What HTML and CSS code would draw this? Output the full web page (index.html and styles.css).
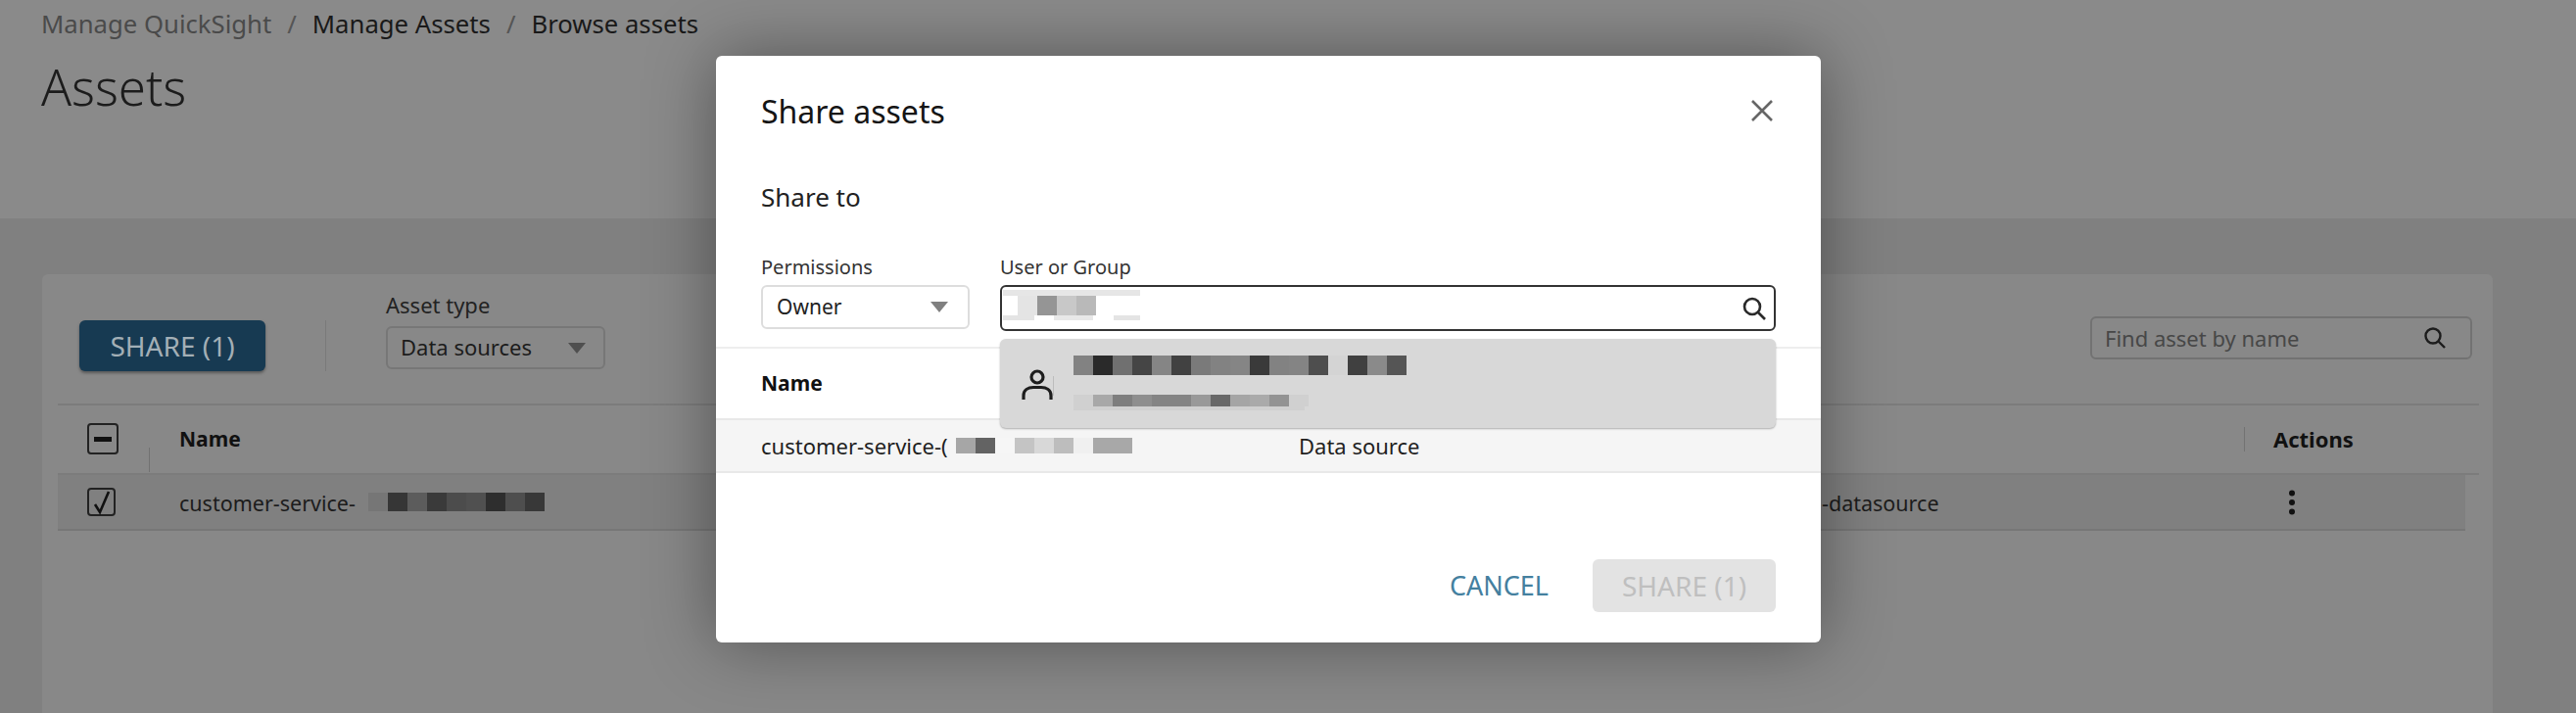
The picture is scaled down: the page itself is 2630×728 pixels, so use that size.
FILE: index.html
```html
<!DOCTYPE html>
<html lang="en">
<head>
  <meta charset="UTF-8" />
  <title>Assets</title>
  <link rel="stylesheet" href="styles.css">
</head>
<body>

  <header class="page-head">
    <nav class="crumbs">
      <span class="crumb-first">Manage QuickSight</span>
      <span class="crumb-sep">/</span>
      <span>Manage Assets</span>
      <span class="crumb-sep">/</span>
      <span>Browse assets</span>
    </nav>
    <h1>Assets</h1>
  </header>

  <main class="content">
    <section class="card">
      <div class="toolbar">
        <button class="btn-share">SHARE (1)</button>
        <div class="tool-sep"></div>
        <div class="asset-type">
          <label>Asset type</label>
          <div class="select select-type">
            <span>Data sources</span>
            <svg class="caret" width="18" height="11" viewBox="0 0 18 11"><polygon points="0,0 18,0 9,11" fill="#4f4f4f"/></svg>
          </div>
        </div>
        <div class="find">
          <span>Find asset by name</span>
          <svg width="24" height="24" viewBox="0 0 24 24" fill="none" stroke="#1c1c1c" stroke-width="2.4"><circle cx="10" cy="10" r="7.5"/><path d="M15.5 15.5 L22 22"/></svg>
        </div>
      </div>

      <div class="table">
        <div class="table-head">
          <div class="col-check">
            <span class="box box-minus"><i></i></span>
          </div>
          <div class="col-sep"></div>
          <div class="col-name">Name</div>
          <div class="col-sep col-sep-actions"></div>
          <div class="col-actions">Actions</div>
        </div>
        <div class="table-row">
          <div class="col-check">
            <span class="box box-checked">
              <svg width="22" height="26" viewBox="0 0 22 26" fill="none" stroke="#111" stroke-width="2.6"><path d="M4 15 L9 23 L18 2"/></svg>
            </span>
          </div>
          <div class="col-name col-name-row">
            <span class="row-text">customer-service-</span>
            <svg class="mosaic" width="180" height="19" shape-rendering="crispEdges">
              <rect x="0" width="20" height="19" fill="#767676"/>
              <rect x="20" width="20" height="19" fill="#363636"/>
              <rect x="40" width="20" height="19" fill="#5c5c5c"/>
              <rect x="60" width="20" height="19" fill="#3a3a3a"/>
              <rect x="80" width="20" height="19" fill="#4c4c4c"/>
              <rect x="100" width="20" height="19" fill="#505050"/>
              <rect x="120" width="20" height="19" fill="#2e2e2e"/>
              <rect x="140" width="20" height="19" fill="#4e4e4e"/>
              <rect x="160" width="20" height="19" fill="#383838"/>
            </svg>
          </div>
          <div class="col-owner">-datasource</div>
          <div class="col-kebab">
            <svg width="8" height="26" viewBox="0 0 8 26" fill="#111"><circle cx="4" cy="3.5" r="3"/><circle cx="4" cy="13" r="3"/><circle cx="4" cy="22.5" r="3"/></svg>
          </div>
        </div>
      </div>
    </section>
  </main>

  <div class="modal">
    <div class="modal-head">
      <h2>Share assets</h2>
      <svg class="modal-close" width="22" height="22" viewBox="0 0 22 22" stroke="#666" stroke-width="2.6"><path d="M1 1 L21 21 M21 1 L1 21"/></svg>
    </div>
    <h3>Share to</h3>

    <div class="fields">
      <div class="field-perm">
        <label>Permissions</label>
        <div class="select select-perm">
          <span>Owner</span>
          <svg class="caret" width="18" height="11" viewBox="0 0 18 11"><polygon points="0,0 18,0 9,11" fill="#808080"/></svg>
        </div>
      </div>
      <div class="field-user">
        <label>User or Group</label>
        <div class="user-input">
          <svg class="mosaic" width="140" height="31" shape-rendering="crispEdges">
            <rect x="0" y="0" width="140" height="6" fill="#e6e6e6"/>
            <rect x="15" y="6" width="20" height="20" fill="#e4e4e4"/>
            <rect x="35" y="6" width="20" height="20" fill="#959595"/>
            <rect x="55" y="6" width="20" height="20" fill="#c8c8c8"/>
            <rect x="75" y="6" width="20" height="20" fill="#b9b9b9"/>
            <rect x="0" y="26" width="32" height="5" fill="#e4e4e4"/>
            <rect x="52" y="26" width="40" height="5" fill="#e8e8e8"/>
            <rect x="113" y="26" width="27" height="5" fill="#e4e4e4"/>
          </svg>
          <svg class="user-search" width="24" height="24" viewBox="0 0 24 24" fill="none" stroke="#2a2a2a" stroke-width="2.6"><circle cx="10" cy="10" r="8"/><path d="M15.5 15.5 L23 23"/></svg>
        </div>

        <div class="suggest">
          <svg class="suggest-icon" width="32" height="32" viewBox="0 0 32 32" fill="none" stroke="#1e1e1e" stroke-width="3.2"><circle cx="16" cy="8" r="6"/><path d="M2 31 V27 C2 21 7 18.5 12 18.5 H20 C25 18.5 30 21 30 27 V31"/></svg>
          <div class="suggest-sep"></div>
          <div class="suggest-text">
            <svg class="mosaic" width="340" height="20" shape-rendering="crispEdges">
              <rect x="0" width="20" height="20" fill="#828282"/>
              <rect x="20" width="20" height="20" fill="#2a2a2a"/>
              <rect x="40" width="20" height="20" fill="#707070"/>
              <rect x="60" width="20" height="20" fill="#454545"/>
              <rect x="80" width="20" height="20" fill="#858585"/>
              <rect x="100" width="20" height="20" fill="#414141"/>
              <rect x="120" width="20" height="20" fill="#7a7a7a"/>
              <rect x="140" width="20" height="20" fill="#828282"/>
              <rect x="160" width="20" height="20" fill="#858585"/>
              <rect x="180" width="20" height="20" fill="#3a3a3a"/>
              <rect x="200" width="20" height="20" fill="#828282"/>
              <rect x="220" width="20" height="20" fill="#848484"/>
              <rect x="240" width="20" height="20" fill="#4e4e4e"/>
              <rect x="260" width="20" height="20" fill="#d4d4d4"/>
              <rect x="280" width="20" height="20" fill="#404040"/>
              <rect x="300" width="20" height="20" fill="#8a8a8a"/>
              <rect x="320" width="20" height="20" fill="#555555"/>
            </svg>
            <svg class="mosaic mosaic-mail" width="248" height="17" shape-rendering="crispEdges">
              <rect x="0" width="20" height="12" fill="#d0d0d0"/>
              <rect x="20" width="20" height="12" fill="#a8a8a8"/>
              <rect x="40" width="20" height="12" fill="#7e7e7e"/>
              <rect x="60" width="20" height="12" fill="#8e8e8e"/>
              <rect x="80" width="20" height="12" fill="#848484"/>
              <rect x="100" width="20" height="12" fill="#848484"/>
              <rect x="120" width="20" height="12" fill="#999999"/>
              <rect x="140" width="20" height="12" fill="#686868"/>
              <rect x="160" width="20" height="12" fill="#a5a5a5"/>
              <rect x="180" width="20" height="12" fill="#aaaaaa"/>
              <rect x="200" width="20" height="12" fill="#939393"/>
              <rect x="220" width="20" height="12" fill="#d0d0d0"/>
              <rect x="0" y="12" width="236" height="4" fill="#d0d0d0"/>
            </svg>
          </div>
        </div>
      </div>
    </div>

    <div class="share-table">
      <div class="share-head">Name</div>
      <div class="share-row">
        <div class="share-name">
          <span class="share-text">customer-service-(</span>
          <svg class="mosaic" width="180" height="16" shape-rendering="crispEdges">
            <rect x="0" width="20" height="16" fill="#a6a6a6"/>
            <rect x="20" width="20" height="16" fill="#636363"/>
            <rect x="40" width="20" height="16" fill="#f6f6f6"/>
            <rect x="60" width="20" height="16" fill="#c4c4c4"/>
            <rect x="80" width="20" height="16" fill="#d8d8d8"/>
            <rect x="100" width="20" height="16" fill="#bdbdbd"/>
            <rect x="120" width="20" height="16" fill="#f0f0f0"/>
            <rect x="140" width="40" height="16" fill="#a8a8a8"/>
          </svg>
        </div>
        <div class="share-type">Data source</div>
      </div>
    </div>

    <div class="modal-foot">
      <button class="btn-cancel">CANCEL</button>
      <button class="btn-disabled" disabled>SHARE (1)</button>
    </div>
  </div>

</body>
</html>
```

FILE: styles.css
```css
html, body {
  margin: 0;
  height: 728px;
  overflow: hidden;
}
body {
  position: relative;
  font-family: "Noto Sans", Arial, sans-serif;
  color: #1a1a1a;
  background: #808080;
  font-size: 22px;
}
h1, h2, h3 {
  margin: 0;
  font-weight: 400;
}
label {
  display: block;
}
button {
  font-family: inherit;
  border: none;
}
.mosaic {
  display: block;
}

/* page behind the dialog */
.page-head {
  height: 223px;
  box-sizing: border-box;
  padding: 8px 42px 0;
  background: #8a8a8a;
}
.crumbs {
  display: flex;
  gap: 16px;
  font-size: 25.7px;
  line-height: 34px;
  color: #191919;
}
.crumb-first {
  color: #4a4a4a;
}
.crumb-sep {
  color: #555;
}
.page-head h1 {
  margin-top: 17px;
  font-size: 51px;
  font-weight: 300;
  line-height: 58px;
  color: #1c1c1c;
}
.content {
  height: 505px;
  box-sizing: border-box;
  padding: 57px 85px 0 43px;
}
.card {
  height: 100%;
  background: #888;
  border-radius: 6px 6px 0 0;
  padding: 0 14px 0 16px;
}
.toolbar {
  height: 132px;
  box-sizing: border-box;
  display: flex;
  align-items: flex-end;
  padding: 0 7px 33px 22px;
}
.btn-share {
  width: 190px;
  height: 52px;
  border-radius: 6px;
  background: #173a52;
  color: #a3afb6;
  font-size: 28px;
  box-shadow: 0 2px 3px rgba(0, 0, 0, .35);
}
.tool-sep {
  width: 1px;
  height: 52px;
  margin-left: 61px;
  background: #7a7a7a;
}
.asset-type {
  margin: 0 0 2px 61px;
}
.asset-type label {
  line-height: 28px;
  margin-bottom: 8px;
  color: #222;
}
.select {
  display: flex;
  align-items: center;
  justify-content: space-between;
  box-sizing: border-box;
  height: 44px;
  border: 2px solid #777;
  border-radius: 6px;
}
.select span {
  padding-bottom: 2px;
}
.select-type {
  width: 224px;
  padding: 0 18px 0 13px;
  color: #1c1c1c;
}
.caret {
  display: block;
}
.find {
  margin: 0 0 12px auto;
  width: 390px;
  height: 44px;
  box-sizing: border-box;
  border: 2px solid #727272;
  border-radius: 6px;
  padding: 0 24px 0 13px;
  display: flex;
  align-items: center;
  justify-content: space-between;
  color: #474747;
}

.table-head {
  display: flex;
  align-items: center;
  height: 73px;
  box-sizing: border-box;
  border-top: 2px solid #7c7c7c;
  border-bottom: 2px solid #7c7c7c;
}
.table-head .col-name,
.table-head .col-actions {
  padding-bottom: 2px;
}
.table-row {
  display: flex;
  align-items: center;
  height: 57px;
  box-sizing: border-box;
  margin-right: 14px;
  background: #808080;
  border-bottom: 2px solid #777;
}
.col-check {
  width: 93px;
  flex: none;
  padding-left: 30px;
  box-sizing: border-box;
}
.table-head .col-check {
  align-self: flex-start;
  padding-top: 18px;
}
.col-sep {
  width: 1px;
  height: 25px;
  margin-top: 42px;
  background: #727272;
  flex: none;
}
.col-sep-actions {
  margin-top: 0;
}
.col-name {
  flex: 1;
  padding-left: 30px;
  font-size: 21px;
  font-weight: 700;
  color: #111;
}
.col-name-row {
  display: flex;
  align-items: center;
  font-size: 21.5px;
  font-weight: 400;
  color: #1c1c1c;
  margin-left: 1px;
}
.row-text {
  width: 193px;
  flex: none;
  padding-top: 2px;
}
.col-owner {
  width: 476px;
  flex: none;
  padding-top: 2px;
  color: #1c1c1c;
  font-size: 21.5px;
}
.col-actions {
  width: 239px;
  flex: none;
  padding-left: 29px;
  box-sizing: border-box;
  font-weight: 700;
  color: #111;
}
.col-kebab {
  width: 181px;
  flex: none;
}
.col-kebab svg {
  display: block;
}
.box {
  display: flex;
  align-items: center;
  justify-content: center;
  box-sizing: border-box;
  border: 2.5px solid #222;
  border-radius: 4px;
}
.box-minus {
  width: 32px;
  height: 32px;
}
.box-minus i {
  display: block;
  width: 18px;
  height: 5px;
  background: #111;
}
.box-checked {
  width: 29px;
  height: 29px;
}

/* dialog */
.modal {
  position: absolute;
  left: 731px;
  top: 57px;
  width: 1128px;
  height: 599px;
  display: flex;
  flex-direction: column;
  background: #fff;
  border-radius: 6px;
  box-shadow: 0 0 70px rgba(0, 0, 0, .4);
}
.modal-head {
  display: flex;
  align-items: center;
  justify-content: space-between;
  height: 40px;
  margin-top: 36px;
  padding: 0 49px 0 46px;
}
.modal-head h2 {
  font-size: 32px;
  color: #151515;
}
.modal-close {
  display: block;
}
.modal h3 {
  margin: 50px 0 0 46px;
  font-size: 26px;
  line-height: 36px;
  color: #222;
}
.fields {
  display: flex;
  gap: 31px;
  margin-top: 39px;
  padding: 0 46px;
  font-size: 20px;
  color: #333;
}
.fields label {
  line-height: 30px;
  margin-bottom: 3px;
}
.select-perm {
  width: 213px;
  height: 45px;
  padding: 0 20px 0 14px;
  border-color: #ddd;
  font-size: 21px;
  color: #222;
}
.field-user {
  flex: 1;
  position: relative;
}
.user-input {
  position: relative;
  height: 47px;
  box-sizing: border-box;
  border: 2.5px solid #333;
  border-radius: 6px;
  padding: 3px 0 0 1px;
}
.user-search {
  position: absolute;
  right: 8px;
  top: 10px;
}
.suggest {
  position: absolute;
  top: 88px;
  left: 0;
  right: 0;
  height: 91px;
  box-sizing: border-box;
  padding-left: 22px;
  display: flex;
  align-items: center;
  background: #d8d8d8;
  border-radius: 6px;
  box-shadow: 0 1px 2px rgba(0, 0, 0, .3);
  z-index: 1;
}
.suggest-icon {
  display: block;
  margin-top: 3px;
}
.suggest-sep {
  width: 1px;
  height: 20px;
  background: #bcbcbc;
  margin-top: 5px;
}
.suggest-text {
  margin-left: 20px;
  align-self: flex-start;
  padding-top: 17px;
}
.mosaic-mail {
  margin-top: 20px;
}
.share-table {
  margin-top: 16px;
}
.share-head {
  height: 73px;
  box-sizing: border-box;
  border-top: 2px solid #eee;
  padding: 0 0 2px 46px;
  display: flex;
  align-items: center;
  font-size: 21px;
  font-weight: 700;
  color: #111;
}
.share-row {
  height: 56px;
  box-sizing: border-box;
  display: flex;
  align-items: center;
  background: #f5f5f5;
  border-top: 2px solid #e8e8e8;
  border-bottom: 2px solid #e8e8e8;
  padding-left: 46px;
  color: #1f1f1f;
}
.share-name {
  display: flex;
  align-items: center;
  width: 549px;
}
.share-text {
  width: 199px;
  flex: none;
  overflow: hidden;
  white-space: nowrap;
}
.modal-foot {
  margin-top: auto;
  display: flex;
  align-items: center;
  justify-content: flex-end;
  gap: 45px;
  padding: 0 46px 31px 0;
}
.btn-cancel {
  background: none;
  padding: 0 0 2px;
  color: #44809f;
  font-size: 27px;
}
.btn-disabled {
  width: 187px;
  height: 54px;
  border-radius: 6px;
  padding-bottom: 2px;
  background: #e3e3e3;
  color: #bfbfbf;
  font-size: 28px;
}
```
